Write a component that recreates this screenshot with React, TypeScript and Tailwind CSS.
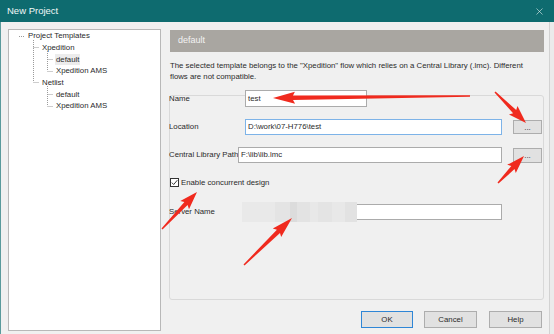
import React from "react";
import { X } from "lucide-react";

type Pt = [number, number];

// red annotation arrow: thin tail, thicker neck, triangular head
const arrowPoints = (tail: Pt, tip: Pt, headLen = 17, headW = 6, tailW = 0.7, neckW = 2.2) => {
  const [x1, y1] = tail;
  const [x2, y2] = tip;
  const L = Math.hypot(x2 - x1, y2 - y1);
  const ux = (x2 - x1) / L;
  const uy = (y2 - y1) / L;
  const nx = -uy;
  const ny = ux;
  const bx = x2 - ux * headLen;
  const by = y2 - uy * headLen;
  const pts: Pt[] = [
    [x1 + nx * tailW, y1 + ny * tailW],
    [bx + nx * neckW, by + ny * neckW],
    [bx - ux * 2 + nx * headW, by - uy * 2 + ny * headW],
    [x2, y2],
    [bx - ux * 2 - nx * headW, by - uy * 2 - ny * headW],
    [bx - nx * neckW, by - ny * neckW],
    [x1 - nx * tailW, y1 - ny * tailW],
  ];
  return pts.map((p) => p.map((v) => v.toFixed(1)).join(",")).join(" ");
};

const arrows: { tail: Pt; tip: Pt; head?: number }[] = [
  { tail: [470, 96], tip: [273, 98], head: 20 },
  { tail: [495, 92], tip: [526, 123] },
  { tail: [498, 183], tip: [524, 156] },
  { tail: [162, 229], tip: [197, 192] },
  { tail: [244, 265], tip: [292, 218], head: 19 },
];

const treeRows = [
  { label: "Project Templates", level: 0 },
  { label: "Xpedition", level: 1 },
  { label: "default", level: 2, selected: true },
  { label: "Xpedition AMS", level: 2 },
  { label: "Netlist", level: 1 },
  { label: "default", level: 2 },
  { label: "Xpedition AMS", level: 2 },
];

const levelPad = ["pl-[18px]", "pl-[32px]", "pl-[46px]"];

const TreeView = () => (
  <div className="relative w-[153px] h-[302px] border border-[#b8b8b8] bg-white">
    <svg className="absolute inset-0 pointer-events-none" width="151" height="300">
      <g stroke="#9a9a9a" strokeWidth="1" strokeDasharray="1 1" fill="none">
        {/* offsets: panel inner origin at (9,30) */}
        <line x1="10" y1="6.5" x2="16" y2="6.5" />
        <line x1="24.5" y1="10" x2="24.5" y2="52" />
        <line x1="24.5" y1="17.5" x2="30" y2="17.5" />
        <line x1="24.5" y1="52.5" x2="30" y2="52.5" />
        <line x1="38.5" y1="21" x2="38.5" y2="41" />
        <line x1="38.5" y1="29.5" x2="44" y2="29.5" />
        <line x1="38.5" y1="41.5" x2="44" y2="41.5" />
        <line x1="38.5" y1="56" x2="38.5" y2="76" />
        <line x1="38.5" y1="64.5" x2="44" y2="64.5" />
        <line x1="38.5" y1="76.5" x2="44" y2="76.5" />
      </g>
    </svg>
    <div className="flex flex-col">
      {treeRows.map((r, i) => (
        <div key={i} className={`flex items-center h-[11.7px] ${levelPad[r.level]}`}>
          <span className={`px-[1px] leading-[11px] ${r.selected ? "bg-[#ececec]" : ""}`}>{r.label}</span>
        </div>
      ))}
    </div>
  </div>
);

const Browse = ({ cls = "" }: { cls?: string }) => (
  <div className={`ml-[11px] w-[29px] flex items-center justify-center bg-[#e1e1e1] border border-[#adadad] text-[8px] leading-none pt-[2px] ${cls}`}>
    ...
  </div>
);

const blurBlocks = [
  "w-[33px] bg-[#e9e9e9]",
  "w-[15px] bg-[#e4e4e4]",
  "w-[7px] bg-[#dcdcdc]",
  "w-[13px] bg-[#e3e3e3]",
  "w-[8px] bg-[#e8e8e8]",
  "w-[14px] bg-[#e4e4e4]",
  "w-[13px] bg-[#e8e8e8]",
  "w-[12px] bg-[#e2e2e2]",
];

export default function App() {
  return (
    <div className="relative w-[554px] h-[334px] overflow-hidden bg-[#ebebeb] text-[7.8px] text-[#2a2a2a] font-['Liberation_Sans',Arial,sans-serif]">
      <div className="h-[22px] bg-[#0e6b6f] flex items-center justify-between pl-[7px] pr-[9px]">
        <span className="text-[9.5px] text-[#f2f7f7]">New Project</span>
        <X size={11} strokeWidth={1.3} color="#e6f0f0" />
      </div>

      <div className="flex h-[312px] w-[550px] bg-[#f0f0f0] border-l border-l-[#5a9a9c] border-r border-r-[#d2d2d2] pl-[7px] pt-[7px]">
        <TreeView />

        <div className="ml-[9px] w-[374px] flex flex-col pt-[1px]">
          <div className="h-[22px] bg-[#a9a6a1] text-[#f3f3f3] text-[9px] pl-[8px] flex items-center">default</div>

          <p className="mt-[8px] leading-[11px] whitespace-nowrap">
            The selected template belongs to the "Xpedition" flow which relies on a Central Library (.lmc). Different
            <br />
            flows are not compatible.
          </p>

          <div className="mt-[13px] -ml-[1px] w-[375px] h-[205px] border border-[#d9d9d9] rounded-[3px] flex flex-col whitespace-nowrap">
            <div className="-mt-[6px] flex items-center h-[17px]">
              <span className="w-[76px] shrink-0 -ml-[1px]">Name</span>
              <div className="w-[122px] h-[17px] bg-white border border-[#ababab] flex items-center pl-[2px]">test</div>
            </div>

            <div className="mt-[12px] flex items-center h-[16px]">
              <span className="w-[76px] shrink-0 -ml-[1px]">Location</span>
              <div className="w-[257px] h-[16px] bg-white border border-[#7db3e8] flex items-center pl-[2px]">
                D:\work\07-H776\test
              </div>
              <Browse cls="h-[14px]" />
            </div>

            <div className="mt-[12px] flex items-center h-[16px]">
              <span className="w-[69px] shrink-0 -ml-[1px]">Central Library Path</span>
              <div className="w-[264px] h-[16px] bg-white border border-[#ababab] flex items-center pl-[2px]">
                F:\lib\lib.lmc
              </div>
              <Browse cls="h-[15px]" />
            </div>

            <div className="mt-[15px] flex items-center h-[9px]">
              <div className="w-[9px] h-[9px] border border-[#333333] bg-white flex items-center justify-center">
                <svg width="7" height="7" viewBox="0 0 7 7">
                  <path d="M0.8 3.6 L2.7 5.5 L6.3 1.2" stroke="#222" strokeWidth="0.9" fill="none" />
                </svg>
              </div>
              <span className="ml-[2px]">Enable concurrent design</span>
            </div>

            <div className="mt-[17px] flex items-center h-[16px]">
              <span className="w-[73px] shrink-0 -ml-[1px]">Server Name</span>
              <div className="w-[260px] h-[16px] bg-white border border-[#ababab] flex items-center">
                <div className="flex h-[20px] -ml-[1px]">
                  {blurBlocks.map((b, i) => (
                    <div key={i} className={`h-full ${b}`} />
                  ))}
                </div>
              </div>
            </div>
          </div>

          <div className="mt-[11px] flex justify-end pr-[2px]">
            <div className="w-[52px] h-[17px] bg-[#e1e1e1] border border-[#2f86d6] flex items-center justify-center">OK</div>
            <div className="ml-[11px] w-[53px] h-[17px] bg-[#e1e1e1] border border-[#adadad] flex items-center justify-center">Cancel</div>
            <div className="ml-[12px] w-[53px] h-[17px] bg-[#e1e1e1] border border-[#adadad] flex items-center justify-center">Help</div>
          </div>
        </div>
      </div>

      <svg className="absolute inset-0 pointer-events-none" width="554" height="334">
        {arrows.map((a, i) => (
          <polygon key={i} points={arrowPoints(a.tail, a.tip, a.head ?? 16)} fill="#f02a1e" />
        ))}
      </svg>
    </div>
  );
}
